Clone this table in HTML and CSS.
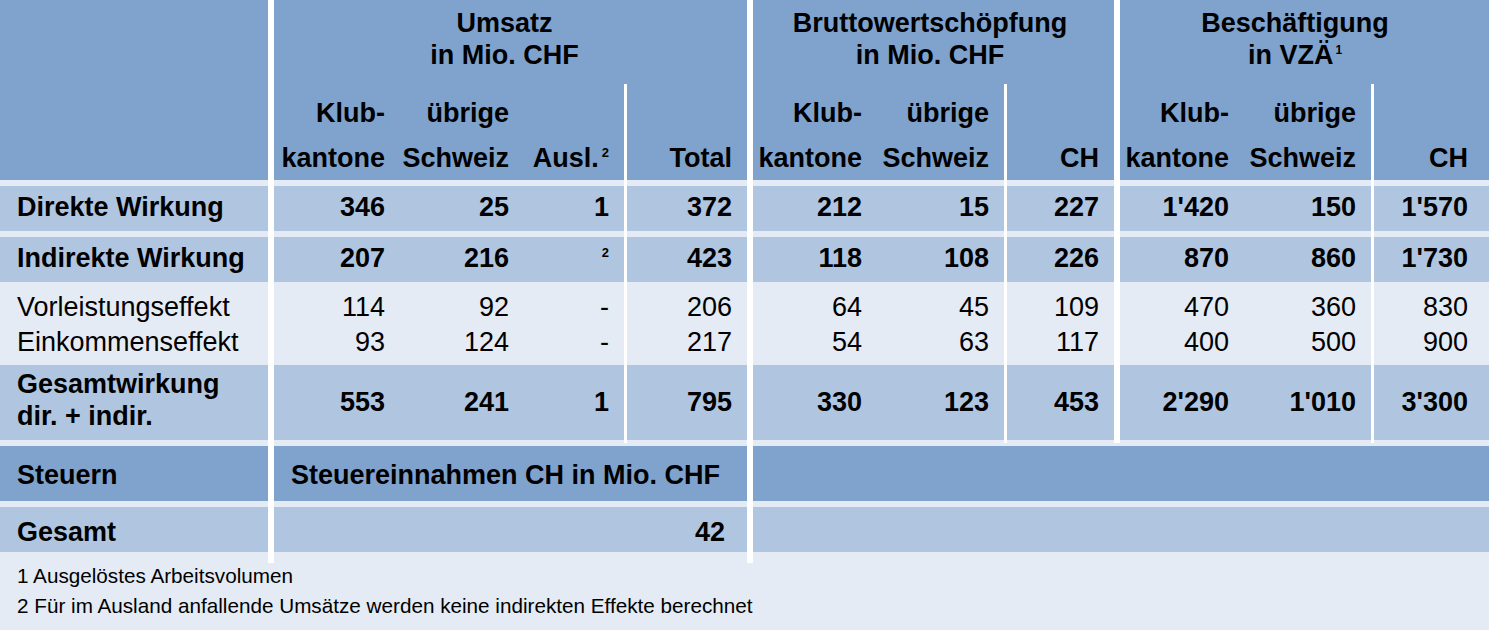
FILE: index.html
```html
<!DOCTYPE html>
<html lang="de">
<head>
<meta charset="utf-8">
<title>Wirkung</title>
<link rel="stylesheet" href="styles.css">
</head>
<body>
<div class="sheet">
  <div class="grid">
    <div class="sep sep-1"></div>
    <div class="sep sep-2"></div>
    <div class="sep sep-3"></div>
    <div class="sep sep-u"></div>
    <div class="sep sep-b"></div>
    <div class="sep sep-e"></div>

    <div class="head corner"></div>
    <div class="head title title-u">Umsatz<br>in Mio. CHF</div>
    <div class="head title title-b">Bruttowertschöpfung<br>in Mio. CHF</div>
    <div class="head title title-e">Beschäftigung<br>in VZÄ<sup class="fn fn-small">1</sup></div>

    <div class="head sub">Klub-<br>kantone</div>
    <div class="head sub">übrige<br>Schweiz</div>
    <div class="head sub one e">Ausl.<sup class="fn">2</sup></div>
    <div class="head sub one e">Total</div>
    <div class="head sub">Klub-<br>kantone</div>
    <div class="head sub e">übrige<br>Schweiz</div>
    <div class="head sub one e">CH</div>
    <div class="head sub">Klub-<br>kantone</div>
    <div class="head sub e">übrige<br>Schweiz</div>
    <div class="head sub one z">CH</div>

    <div class="main r4 lab">Direkte Wirkung</div>
    <div class="main r4 n">346</div>
    <div class="main r4 n">25</div>
    <div class="main r4 n e">1</div>
    <div class="main r4 n e">372</div>
    <div class="main r4 n">212</div>
    <div class="main r4 n e">15</div>
    <div class="main r4 n e">227</div>
    <div class="main r4 n">1'420</div>
    <div class="main r4 n e">150</div>
    <div class="main r4 n z">1'570</div>

    <div class="main r6 lab">Indirekte Wirkung</div>
    <div class="main r6 n">207</div>
    <div class="main r6 n">216</div>
    <div class="main r6 n e"><sup class="fn">2</sup></div>
    <div class="main r6 n e">423</div>
    <div class="main r6 n">118</div>
    <div class="main r6 n e">108</div>
    <div class="main r6 n e">226</div>
    <div class="main r6 n">870</div>
    <div class="main r6 n e">860</div>
    <div class="main r6 n z">1'730</div>

    <div class="part lab">Vorleistungseffekt<br>Einkommenseffekt</div>
    <div class="part n">114<br>93</div>
    <div class="part n">92<br>124</div>
    <div class="part n e">-<br>-</div>
    <div class="part n e">206<br>217</div>
    <div class="part n">64<br>54</div>
    <div class="part n e">45<br>63</div>
    <div class="part n e">109<br>117</div>
    <div class="part n">470<br>400</div>
    <div class="part n e">360<br>500</div>
    <div class="part n z">830<br>900</div>

    <div class="whole lab two">Gesamtwirkung<br>dir. + indir.</div>
    <div class="whole n">553</div>
    <div class="whole n">241</div>
    <div class="whole n e">1</div>
    <div class="whole n e">795</div>
    <div class="whole n">330</div>
    <div class="whole n e">123</div>
    <div class="whole n e">453</div>
    <div class="whole n">2'290</div>
    <div class="whole n e">1'010</div>
    <div class="whole n z">3'300</div>

    <div class="tax lab">Steuern</div>
    <div class="tax span-u tax-title">Steuereinnahmen CH in Mio. CHF</div>
    <div class="tax span-rest"></div>

    <div class="sum lab">Gesamt</div>
    <div class="sum span-u n sum-value">42</div>
    <div class="sum span-rest"></div>
  </div>

  <div class="notes">
    <div>1 Ausgelöstes Arbeitsvolumen</div>
    <div>2 Für im Ausland anfallende Umsätze werden keine indirekten Effekte berechnet</div>
  </div>
</div>
</body>
</html>
```

FILE: styles.css
```css
* {
  box-sizing: border-box;
}

html,
body {
  margin: 0;
  padding: 0;
  background: #e4ebf4;
}

body {
  font-family: "Liberation Sans", Arial, Helvetica, sans-serif;
  color: #000;
}

.sheet {
  width: 1489px;
  height: 630px;
  overflow: hidden;
}

.grid {
  display: grid;
  grid-template-columns: 268px 6px 117px 124px 109px 3px 120px 6px 115px 136px 3px 107px 6px 115px 136px 3px 115px;
  grid-template-rows: 84px 96px 6px 45px 6px 45px 83px 75px 3px 3px 55px 6px 45px 11px;
  font-size: 27px;
  font-weight: bold;
}

/* separators */
.sep {
  background: #ffffff;
}
.sep-1 { grid-column: 2; grid-row: 1 / 15; }
.sep-2 { grid-column: 8; grid-row: 1 / 15; }
.sep-3 { grid-column: 13; grid-row: 1 / 10; }
.sep-u { grid-column: 6; grid-row: 2 / 10; }
.sep-b { grid-column: 11; grid-row: 2 / 10; }
.sep-e { grid-column: 16; grid-row: 2 / 10; }

/* header */
.head {
  background: #7fa3cd;
}

.corner {
  grid-column: 1;
  grid-row: 1 / 3;
}

.title {
  grid-row: 1;
  text-align: center;
  line-height: 32px;
  padding-top: 7px;
  white-space: nowrap;
}
.title-u { grid-column: 3 / 8; padding-right: 12px; }
.title-b { grid-column: 9 / 13; padding-right: 7px; }
.title-e { grid-column: 14 / 18; padding-right: 19px; }

.sub {
  grid-row: 2;
  text-align: right;
  line-height: 45px;
  padding-top: 7px;
  padding-right: 6px;
  white-space: nowrap;
}
.sub.one {
  padding-top: 52px;
}

.fn {
  font-size: 13px;
  line-height: 0;
  vertical-align: 10px;
  margin-left: 3px;
}
.fn-small {
  font-size: 12px;
  margin-left: 2px;
}

/* body cells */
.lab {
  grid-column: 1;
  padding-left: 17px;
  white-space: nowrap;
}

.n {
  text-align: right;
  padding-right: 6px;
  white-space: nowrap;
}
.e {
  padding-right: 15px;
}
.z {
  padding-right: 21px;
}

.main {
  background: #b0c6e0;
  line-height: 31px;
  padding-top: 6px;
}
.r4 { grid-row: 4; }
.r6 { grid-row: 6; }

.part {
  grid-row: 7;
  font-weight: normal;
  line-height: 35px;
  padding-top: 8px;
}

.whole {
  grid-row: 8;
  background: #b0c6e0;
  line-height: 31px;
  padding-top: 22px;
}
.whole.two {
  line-height: 32px;
  padding-top: 3px;
}

.tax {
  grid-row: 11;
  background: #7fa3cd;
  line-height: 31px;
  padding-top: 14px;
}

.sum {
  grid-row: 13;
  background: #b0c6e0;
  line-height: 31px;
  padding-top: 10px;
}

.span-u {
  grid-column: 3 / 8;
}
.span-rest {
  grid-column: 9 / 18;
}

.tax-title {
  padding-left: 17px;
  white-space: nowrap;
}

.sum-value {
  padding-right: 22px;
}

/* footnotes */
.notes {
  font-size: 20.7px;
  line-height: 30px;
  padding-left: 17px;
  margin-top: -2px;
}
```
